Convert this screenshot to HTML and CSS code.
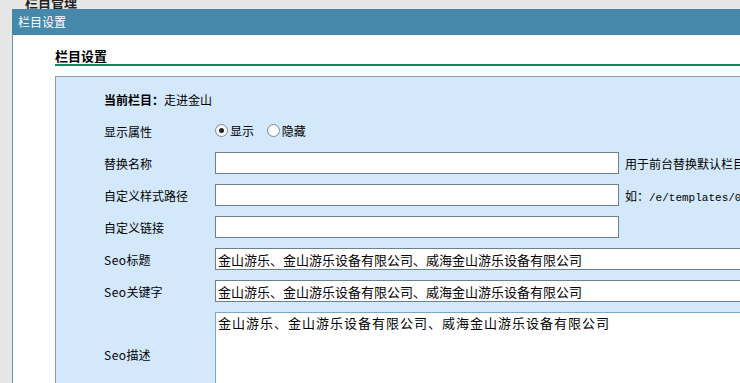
FILE: index.html
```html
<!DOCTYPE html>
<html lang="zh-cn">
<head>
    <meta charset="UTF-8">
    <title>栏目设置</title>
    <link rel="stylesheet" href="styles.css">
</head>
<body>
    <div class="pageTitle">栏目管理</div>

    <div class="dialog">
        <div class="dialogBar">栏目设置</div>
        <div class="dialogBody">
            <h2 class="sectionTitle">栏目设置</h2>

            <div class="formBox">
                <table class="formTable">
                    <tr>
                        <td class="lbl" colspan="2"><b>当前栏目：</b>走进金山</td>
                    </tr>
                    <tr>
                        <td class="lbl">显示属性</td>
                        <td>
                            <label class="radio"><input type="radio" name="show" checked>显示</label>
                            <label class="radio"><input type="radio" name="show">隐藏</label>
                        </td>
                    </tr>
                    <tr>
                        <td class="lbl">替换名称</td>
                        <td><input type="text" class="txt"><span class="note">用于前台替换默认栏目名称</span></td>
                    </tr>
                    <tr>
                        <td class="lbl">自定义样式路径</td>
                        <td><input type="text" class="txt"><span class="note">如：<span class="mono">/e/templates/01/style.css</span></span></td>
                    </tr>
                    <tr>
                        <td class="lbl">自定义链接</td>
                        <td><input type="text" class="txt"></td>
                    </tr>
                    <tr>
                        <td class="lbl"><span class="en">Seo</span>标题</td>
                        <td><input type="text" class="txt wide" value="金山游乐、金山游乐设备有限公司、威海金山游乐设备有限公司"></td>
                    </tr>
                    <tr>
                        <td class="lbl"><span class="en">Seo</span>关键字</td>
                        <td><input type="text" class="txt wide" value="金山游乐、金山游乐设备有限公司、威海金山游乐设备有限公司"></td>
                    </tr>
                    <tr class="areaRow">
                        <td class="lbl"><span class="en">Seo</span>描述</td>
                        <td><textarea class="area">金山游乐、金山游乐设备有限公司、威海金山游乐设备有限公司</textarea></td>
                    </tr>
                </table>
            </div>
        </div>
    </div>
</body>
</html>
```

FILE: styles.css
```css
body {
    margin: 0;
    padding: 0;
    background: #e6e6e6;
    font-family: "Noto Sans CJK SC", "DejaVu Sans", sans-serif;
    font-size: 12px;
    color: #000;
    overflow: hidden;
    height: 383px;
    position: relative;
}

/* titulo da pagina por tras do dialogo */
.pageTitle {
    padding-left: 25px;
    margin-top: -5px;
    font-size: 13px;
    line-height: 14px;
    font-weight: bold;
    color: #222;
}

.dialog {
    position: absolute;
    left: 12px;
    top: 9px;
    width: 960px;
    height: 500px;
    background: #fff;
}

.dialogBar {
    height: 26px;
    line-height: 26px;
    padding-left: 6px;
    background: #4688aa;
    color: #fff;
    font-size: 12px;
}

.dialogBody {
    border-left: 1px solid #6f93a6;
    height: 100%;
    padding-left: 42px;
}

.sectionTitle {
    margin: 0 0 10px 0;
    padding-top: 13px;
    font-size: 13px;
    line-height: 16px;
    font-weight: bold;
    border-bottom: 2px solid #16895c;
}

/* painel azul do formulario */
.formBox {
    background: #d3e8fb;
    border-top: 1px solid #8d9bb0;
    border-left: 1px solid #8d9bb0;
    padding: 6px 0 0 48px;
    height: 400px;
}

.formTable {
    border-collapse: collapse;
}

.formTable td {
    padding: 0;
    height: 32px;
    vertical-align: middle;
    white-space: nowrap;
}

.formTable td.lbl {
    width: 111px;
    font-size: 12px;
}

.en {
    letter-spacing: 0.5px;
}

.radio {
    display: inline-flex;
    align-items: center;
    margin-right: 10px;
    font-size: 12px;
}

.radio input {
    appearance: none;
    -webkit-appearance: none;
    width: 13px;
    height: 13px;
    margin: 0 2px 0 0;
    border: 1px solid #7f8a94;
    border-radius: 50%;
    background: radial-gradient(circle at 60% 60%, #fff 40%, #e4e4e4 100%);
    box-sizing: border-box;
    position: relative;
}

.radio input:checked::after {
    content: "";
    position: absolute;
    left: 3px;
    top: 3px;
    width: 5px;
    height: 5px;
    border-radius: 50%;
    background: #222;
}

.txt {
    width: 404px;
    height: 22px;
    box-sizing: border-box;
    border: 1px solid #6e7f8e;
    background: #fff;
    padding: 0 2px;
    margin: 0;
    font-family: "Noto Sans CJK SC", sans-serif;
    font-size: 13px;
    vertical-align: middle;
}

.txt.wide {
    width: 620px;
}

.note {
    margin-left: 6px;
    font-size: 12px;
    vertical-align: middle;
}

.mono {
    font-family: "Liberation Mono", monospace;
    font-size: 11px;
}

.areaRow td {
    height: 94px;
}

.area {
    display: block;
    width: 620px;
    height: 84px;
    box-sizing: border-box;
    margin: 0;
    border: 1px solid #77a9c9;
    padding: 1px 2px;
    font-family: "Noto Sans CJK SC", sans-serif;
    font-size: 13px;
    letter-spacing: 1px;
    line-height: 18px;
    resize: none;
}
```
